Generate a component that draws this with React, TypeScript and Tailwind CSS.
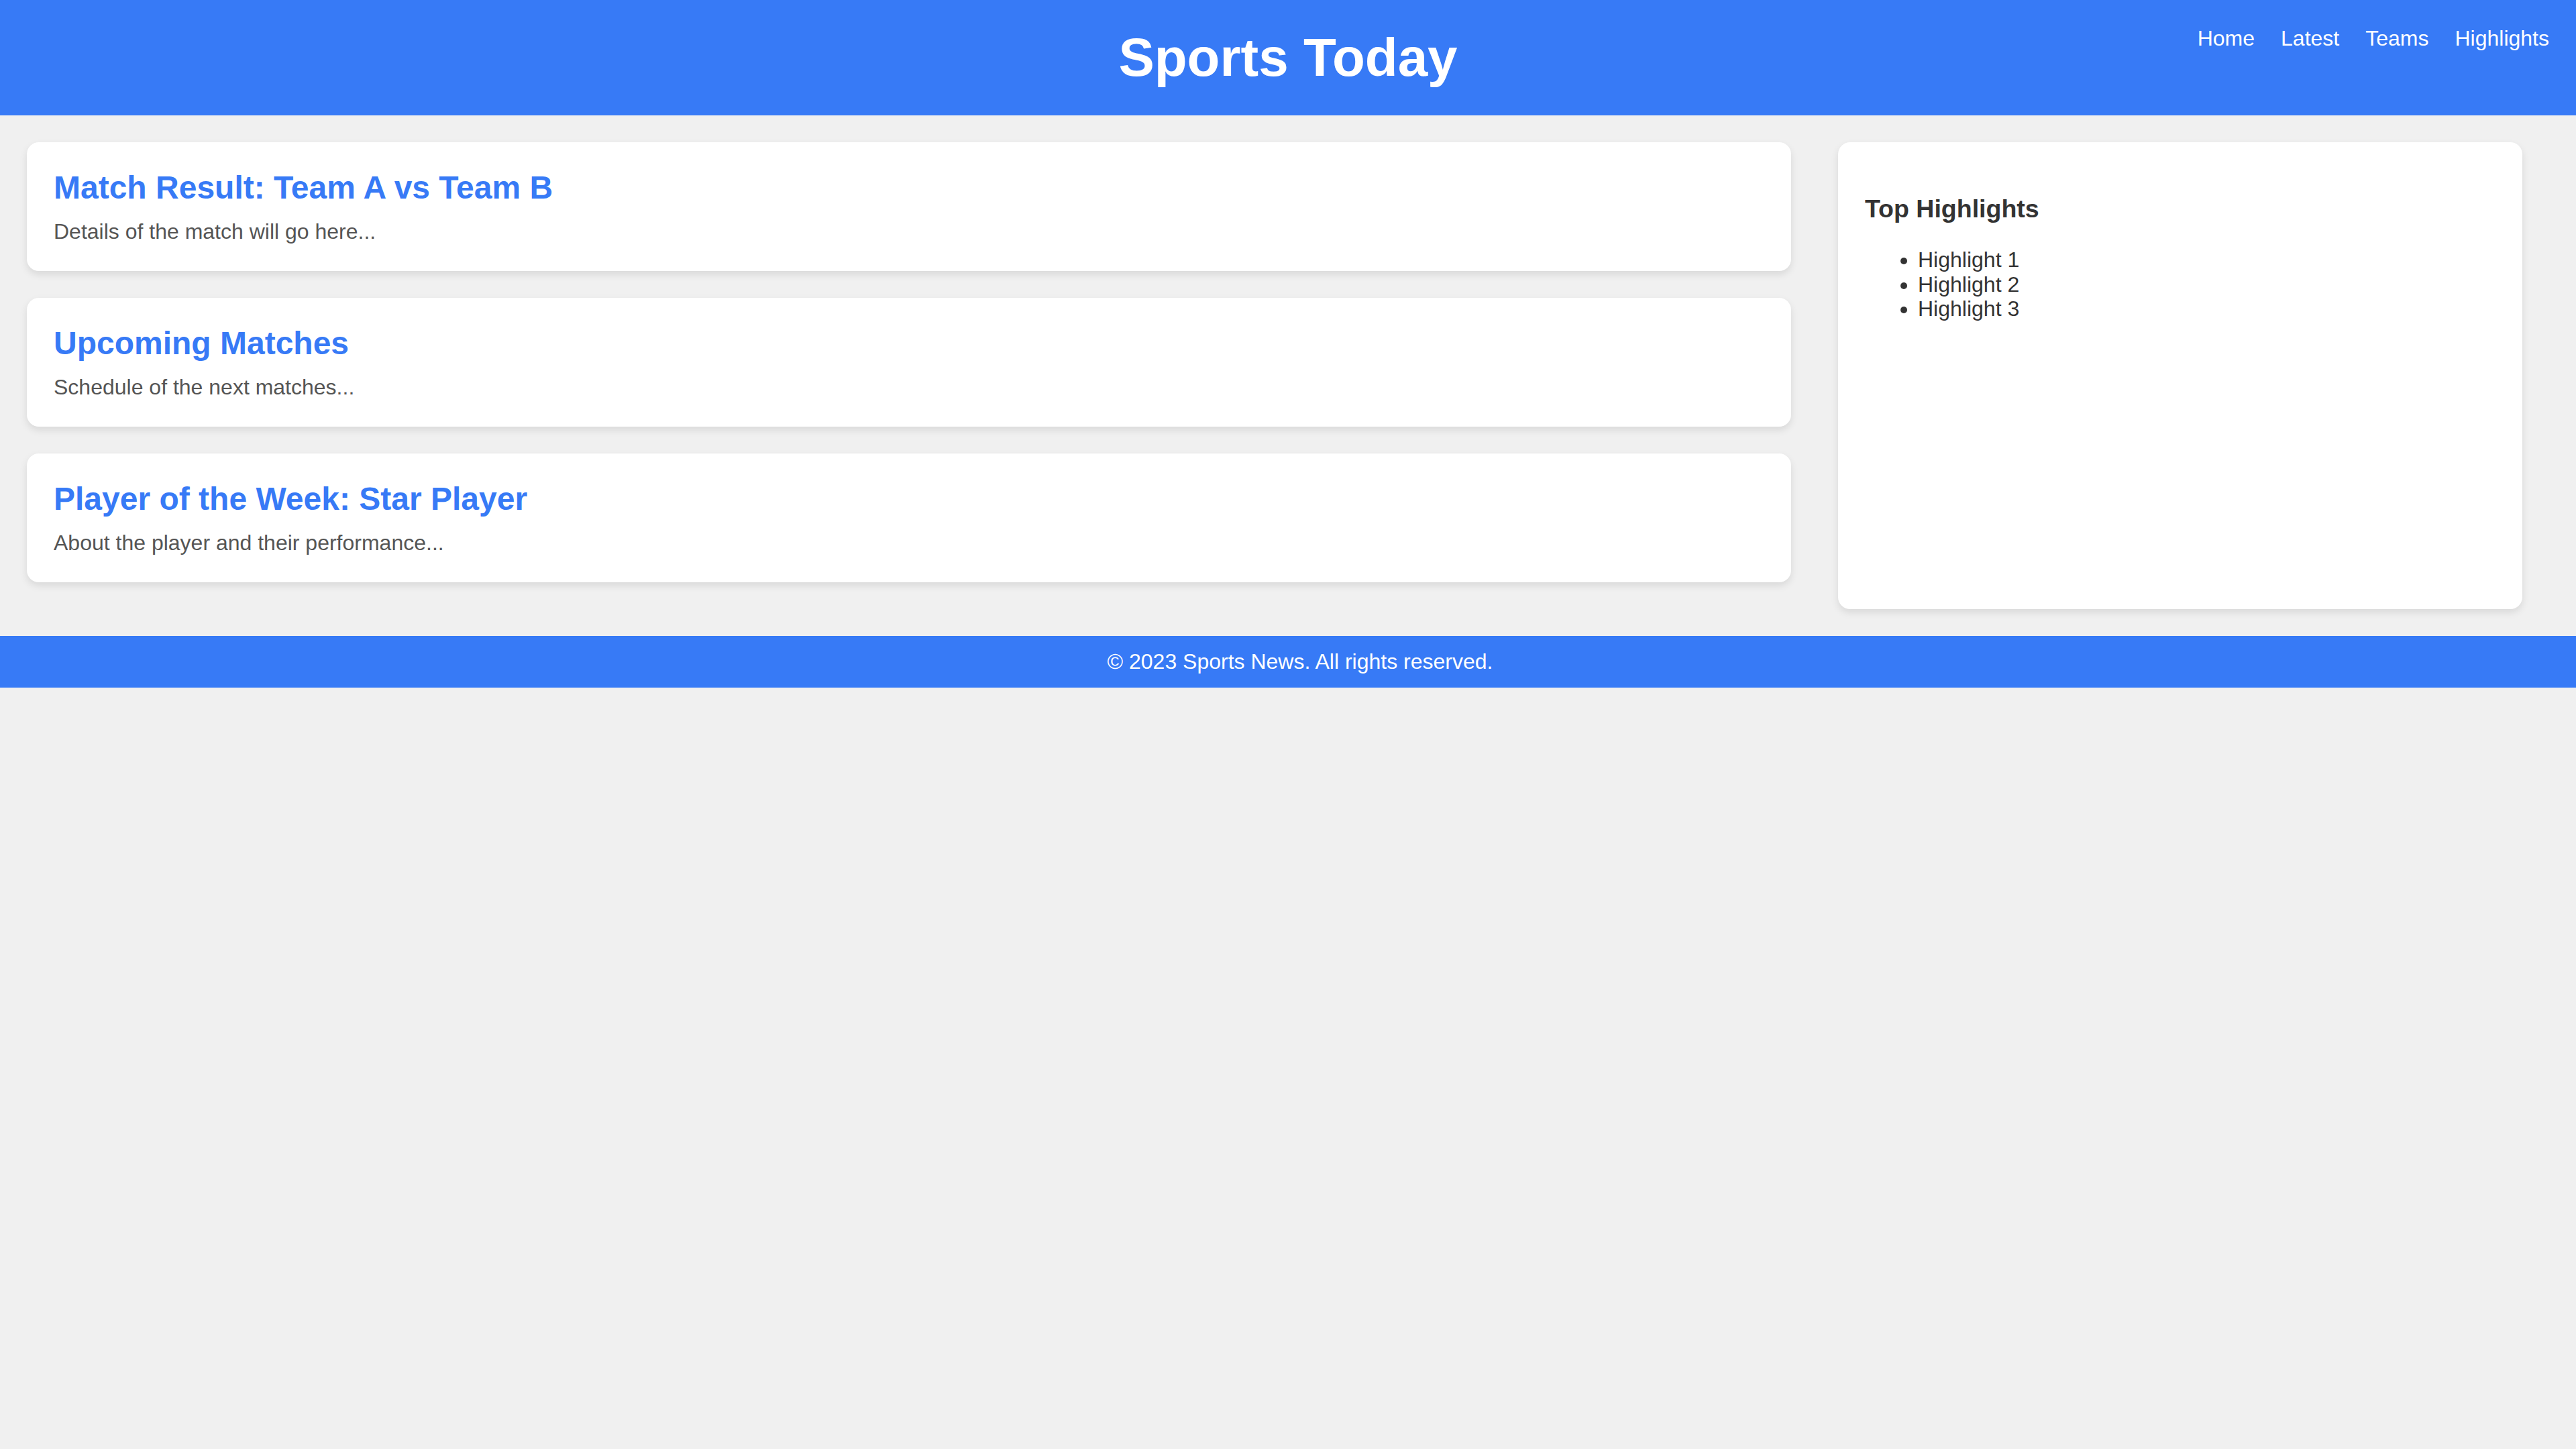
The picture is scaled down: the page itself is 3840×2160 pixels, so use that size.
import React from "react";

const cards = [
  { title: "Match Result: Team A vs Team B", body: "Details of the match will go here..." },
  { title: "Upcoming Matches", body: "Schedule of the next matches..." },
  { title: "Player of the Week: Star Player", body: "About the player and their performance..." },
];

export default function App() {
  return (
    <div
      className="min-h-screen bg-[#f0f0f0] text-[#333]"
      style={{ fontFamily: '"Liberation Sans", Arial, sans-serif' }}
    >
      <header className="grid h-[172px] grid-cols-[1fr_auto_1fr] items-center bg-[#377af6] px-[40px] text-white">
        <div />
        <h1 className="text-[80px] font-bold leading-[90px]">Sports Today</h1>
        <nav className="mt-[39px] flex gap-[39px] self-start justify-self-end text-[32px] leading-[37px]">
          <a href="#">Home</a>
          <a href="#">Latest</a>
          <a href="#">Teams</a>
          <a href="#">Highlights</a>
        </nav>
      </header>

      <main className="flex gap-[70px] pb-[40px] pl-[40px] pr-[80px] pt-[40px]">
        <div className="flex-1">
          {cards.map((c) => (
            <article
              key={c.title}
              className="mb-[40px] rounded-[18px] bg-white px-[40px] pb-[40px] pt-[41px] shadow-[0_5px_12px_rgba(0,0,0,0.1)]"
            >
              <h2 className="mb-[20px] text-[48px] font-bold leading-[54px] text-[#377af6]">{c.title}</h2>
              <p className="text-[32px] leading-[37px] text-[#555]">{c.body}</p>
            </article>
          ))}
        </div>
        <aside className="w-[1020px] rounded-[18px] bg-white px-[40px] pt-[40px] shadow-[0_5px_12px_rgba(0,0,0,0.1)]">
          <h3 className="mb-[37px] mt-[38px] text-[37.5px] font-bold leading-[42px] text-[#333]">Top Highlights</h3>
          <ul className="list-disc pl-[79px] text-[32px] leading-[36.7px] text-[#333]">
            <li>Highlight 1</li>
            <li>Highlight 2</li>
            <li>Highlight 3</li>
          </ul>
        </aside>
      </main>

      <footer className="bg-[#377af6] py-[20px] pl-[36px] text-center text-[32px] leading-[37px] text-white">
        © 2023 Sports News. All rights reserved.
      </footer>
    </div>
  );
}
